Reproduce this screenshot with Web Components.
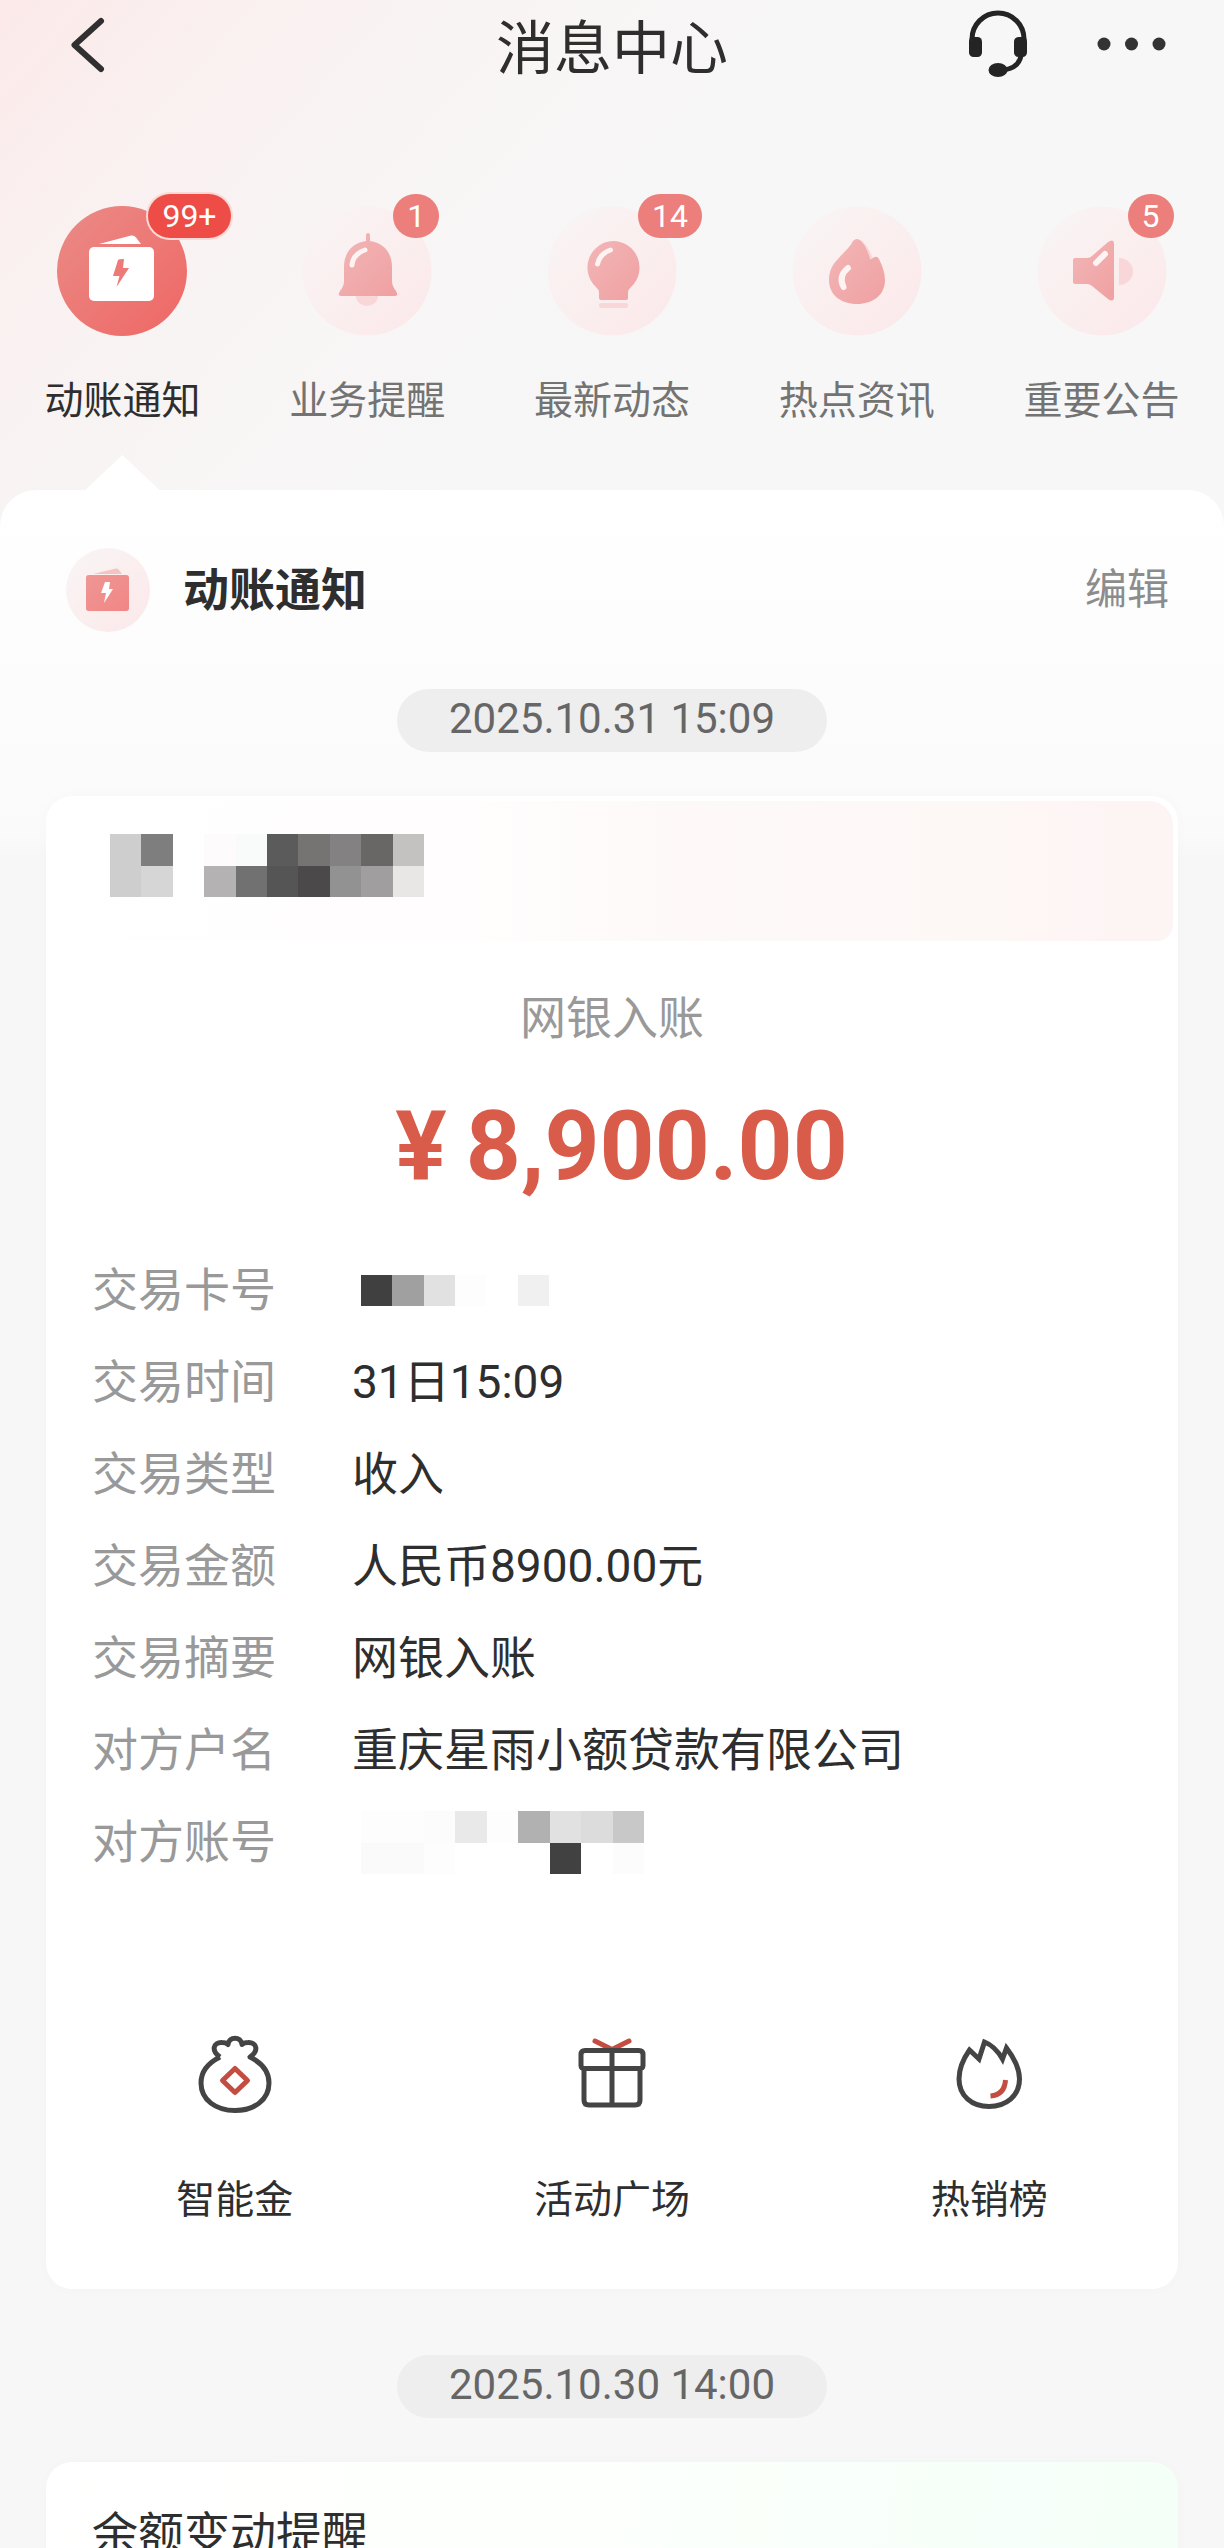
<!DOCTYPE html>
<html lang="zh-CN">
<head>
<meta charset="utf-8">
<meta name="viewport" content="width=device-width, initial-scale=1">
<title>消息中心</title>
<style>
  html, body { height: 100%; }
  body {
    margin: 0;
    background: #f7f7f7;
    color: #2e2e2e;
    font-family: Roboto, "Noto Sans CJK SC", sans-serif;
    font-size: 46px;
    --ink: #2e2e2e;
    --muted: #999;
    --accent: #d95c4a;
  }
</style>
</head>
<body>
<message-center>
  <nav-bar slot="bar">消息中心</nav-bar>
  <category-tabs slot="tabs">
    <category-tab icon="wallet" badge="99+" selected>动账通知</category-tab>
    <category-tab icon="bell" badge="1">业务提醒</category-tab>
    <category-tab icon="bulb" badge="14">最新动态</category-tab>
    <category-tab icon="flame">热点资讯</category-tab>
    <category-tab icon="horn" badge="5">重要公告</category-tab>
  </category-tabs>
  <message-panel heading="动账通知" action="编辑">
    <message-group time="2025.10.31 15:09">
      <transaction-card kind="网银入账" currency="¥" amount="8,900.00">
        <pixel-mosaic slot="source" label="来源" cols="10" rows="2"
          cells="cecece,7e7e7e,,fdfbfc,f9fafa,5b5b5b,757472,838182,686766,c3c2c0,cecece,d6d6d6,,b4b2b3,717171,555555,4b494a,929292,a09e9f,e8e7e6"></pixel-mosaic>
        <detail-row label="交易卡号"><pixel-mosaic label="卡号" cols="6" rows="1" inset cells="404040,a0a0a0,e1e1e1,fdfdfd,,f0f0f0"></pixel-mosaic></detail-row>
        <detail-row label="交易时间">31日15:09</detail-row>
        <detail-row label="交易类型">收入</detail-row>
        <detail-row label="交易金额">人民币8900.00元</detail-row>
        <detail-row label="交易摘要">网银入账</detail-row>
        <detail-row label="对方户名">重庆星雨小额贷款有限公司</detail-row>
        <detail-row label="对方账号"><pixel-mosaic label="账号" cols="9" rows="2" inset cells="fdfdfd,fdfdfd,fcfcfc,e9e9e9,fdfdfd,b1b1b1,e1e1e1,dcdcdc,c8c8c8,fafafa,fafafa,fdfdfd,,,,414141,,fcfcfc"></pixel-mosaic></detail-row>
        <quick-action slot="actions" icon="bag">智能金</quick-action>
        <quick-action slot="actions" icon="gift">活动广场</quick-action>
        <quick-action slot="actions" icon="fire">热销榜</quick-action>
      </transaction-card>
    </message-group>
    <message-group time="2025.10.30 14:00">
      <balance-card>余额变动提醒</balance-card>
    </message-group>
  </message-panel>
</message-center>

<script>
const define = (name, render) => customElements.define(name, class extends HTMLElement {
  connectedCallback() {
    if (this.shadowRoot) return;
    this.attachShadow({ mode: 'open' }).innerHTML = render(this);
  }
});

const RESET = `button{all:unset;box-sizing:border-box;cursor:pointer}button:focus-visible{outline:3px solid #d95c4a}svg{display:block}`;

/* Category icons share a 132-unit disc. */
const GRADS = `<defs>
  <linearGradient id="on" x1="0" y1="0" x2="1" y2="1"><stop offset="0" stop-color="#ea8b87"/><stop offset="1" stop-color="#ef6764"/></linearGradient>
  <linearGradient id="off" x1="0" y1="0" x2="1" y2="1"><stop offset="0" stop-color="#f9f5f5"/><stop offset="1" stop-color="#fce8e9"/></linearGradient>
  <linearGradient id="g" x1="0" y1="0" x2="1" y2="1"><stop offset="0" stop-color="#f2b6b7"/><stop offset="1" stop-color="#f0a0a1"/></linearGradient>
</defs>`;
const DISC = '<circle cx="66" cy="66" r="64.5" fill="url(#off)"/>';
const ICONS = {
  wallet: `<circle cx="66" cy="66" r="65" fill="url(#on)"/>
    <path d="M43 39 75 30.500Q78 30 80 32.500L85 39Z" fill="#fff"/>
    <rect x="33" y="42" width="65" height="54" rx="5" fill="#fff"/>
    <path d="M62 55Q63 54 68 54L67 63H73L60.500 82 63.500 71H57Z" fill="#ee7a77"/>`,
  bell: `${DISC}<path d="M55 91h22a11 10 0 0 1-22 0z" fill="#f9d6d7"/>
    <path d="M67 28q2 0 2 2v6c14 2 22 12 22 26v14q0 5 4 10 3 5-1 5H40q-4 0-1-5 4-5 4-10V62c0-14 8-24 22-26v-6q0-2 2-2z" fill="url(#g)"/>
    <path d="M51 60q1-11 13-15" fill="none" stroke="#fdf3f3" stroke-width="5" stroke-linecap="round"/>`,
  bulb: `${DISC}<path d="M67 36a26.500 26.500 0 0 1 18.500 45.500q-3.500 3-3.500 6V93q0 2-2 2H55q-2 0-2-2V87.500q0-3-3.500-6A26.500 26.500 0 0 1 67 36z" fill="url(#g)"/>
    <path d="M51.500 59q2-10 13-14" fill="none" stroke="#fdf3f3" stroke-width="5" stroke-linecap="round"/>
    <rect x="53" y="98" width="29" height="5" rx="2" fill="#f9d6d7"/>`,
  flame: `${DISC}<path d="M70 35q8 7 12 19l-6 6-10-16z" fill="#f9d6d7"/>
    <path d="M62 36q4-4 8 0 6 6 9 18 1 1 3-1 4-3 6 1 6 12 6 21c0 15-12 24-28 24S38 90 38 75c0-9 3-15 9-21 7-8 12-12 15-18z" fill="url(#g)"/>
    <path d="M57 63Q47 71 52.500 82" fill="none" stroke="#fdf3f3" stroke-width="6" stroke-linecap="round"/>`,
  horn: `${DISC}<path d="M83 53a14 13.500 0 0 1 0 27z" fill="#f9d6d7"/>
    <path d="M39 53h12q3 0 5-2l16-14q6-4 6 2v53q0 6-6 2L56 81q-2-2-5-2H39q-2 0-2-2V55q0-2 2-2z" fill="url(#g)"/>
    <path d="M60 58 69 49" stroke="#fdf3f3" stroke-width="6" stroke-linecap="round"/>`
};

define('message-center', () => `<style>
  :host{display:flex;flex-direction:column;height:100vh;overflow:hidden;
    background:linear-gradient(132deg,#fce9e9 0,#faf0f0 180px,#f8f5f5 440px,#f7f7f7 740px)}
  main{flex:1;min-height:0;display:flex;flex-direction:column}
</style><slot name="bar"></slot><slot name="tabs"></slot><main><slot></slot></main>`);

define('nav-bar', () => `<style>${RESET}
  :host{display:block}
  header{display:grid;grid-template-columns:1fr auto 1fr;align-items:center;height:88px;padding:0 58px}
  h1{margin:0;font:400 58px/84px "Noto Sans CJK SC",sans-serif}
  .end{display:flex;justify-content:flex-end;align-items:center;gap:68px}
</style><header>
  <button aria-label="返回"><svg width="60" height="66" viewBox="0 0 60 66"><path d="M43 10 16.500 34 43 58" fill="none" stroke="#303030" stroke-width="6" stroke-linecap="round" stroke-linejoin="round"/></svg></button>
  <h1><slot></slot></h1>
  <div class="end">
    <button aria-label="客服"><svg width="60" height="68" viewBox="0 0 60 68"><path d="M3 32V29a26 26 0 0 1 52 0v3M52 46q-3 13-19 14" fill="none" stroke="#242424" stroke-width="5"/><rect x="0" y="27" width="13" height="20" rx="4.500" fill="#242424"/><rect x="45" y="27" width="13" height="20" rx="4.500" fill="#242424"/><ellipse cx="29" cy="60" rx="9.500" ry="7" fill="#242424"/></svg></button>
    <button aria-label="更多"><svg width="69" height="14" viewBox="0 0 69 14"><g fill="#333"><circle cx="7" cy="7" r="6.500"/><circle cx="34.500" cy="7" r="6.500"/><circle cx="62" cy="7" r="6.500"/></g></svg></button>
  </div></header>`);

define('category-tabs', () => `<style>
  :host{display:block}
  nav{display:grid;grid-auto-flow:column;grid-auto-columns:1fr;padding-top:117px}
</style><nav role="tablist"><slot></slot></nav>`);

define('category-tab', el => {
  const on = el.hasAttribute('selected'), badge = el.getAttribute('badge');
  return `<style>${RESET}
  :host{display:block}
  button{display:flex;flex-direction:column;align-items:center;width:100%}
  .icon{position:relative}
  .badge{position:absolute;left:92px;top:-11px;box-sizing:border-box;min-width:44px;height:44px;padding:0 14px;border-radius:22px;
    background:${on ? '#ee4c46' : '#ec7e7b'};${on ? 'box-shadow:0 0 0 2px #fbd9d6;' : ''}color:#fff;font:400 32px/44px Roboto,sans-serif;text-align:center}
  .label{margin-top:36px;font-size:39px;line-height:56px;color:${on ? 'var(--ink)' : '#737373'};white-space:nowrap}
  .pointer{width:74px;height:35px;margin-top:26px;background:${on ? '#fff' : 'none'};clip-path:polygon(50% 0,100% 100%,0 100%)}
</style><button role="tab" aria-selected="${on}">
  <span class="icon"><svg width="132" height="132" viewBox="0 0 132 132">${GRADS}${ICONS[el.getAttribute('icon')]}</svg>${badge ? `<span class="badge">${badge}</span>` : ''}</span>
  <span class="label"><slot></slot></span><span class="pointer"></span></button>`;
});

define('message-panel', el => `<style>${RESET}
  :host{flex:1;min-height:0;display:flex;flex-direction:column;border-radius:36px 36px 0 0;
    background:linear-gradient(#fff 0,#fdfdfd 120px,#fafafa 345px,#f7f7f7 370px)}
  header{display:flex;align-items:center;gap:33px;padding:56px 55px 55px 66px}
  h2{flex:1;margin:0;font-size:46px;font-weight:700;line-height:88px}
  header button{font-size:42px;line-height:80px;color:#8c8c8c}
  .feed{flex:1;min-height:0;overflow:auto;scrollbar-width:none;display:flex;flex-direction:column;gap:66px}
</style><header>
  <svg width="84" height="88" viewBox="0 0 84 88" aria-hidden="true">${GRADS}
    <circle cx="42" cy="44" r="42" fill="url(#off)"/>
    <path d="M27 28 50 22.500Q52 22 53 24L56 28Z" fill="#f6c3c3"/>
    <rect x="20" y="29" width="43" height="36" rx="3" fill="#f2a09f"/><rect x="20" y="29" width="43" height="36" rx="3" fill="url(#on)" opacity=".45"/>
    <path d="M39 36h5l-1 7h4l-9 14 2-10h-5Z" fill="#fff"/></svg>
  <h2>${el.getAttribute('heading')}</h2><button>${el.getAttribute('action')}</button></header>
  <div class="feed"><slot></slot></div>`);

define('message-group', el => `<style>
  :host{display:flex;flex-direction:column;gap:44px;flex-shrink:0}
  time{align-self:center;box-sizing:border-box;height:63px;padding:0 52px;border-radius:32px;background:#eee;color:#666;font-size:42px;line-height:60px;white-space:nowrap}
</style><time>${el.getAttribute('time')}</time><slot></slot>`);

const CARD = `margin:0 46px;border-radius:26px;background:#fff;box-shadow:0 0 14px rgba(0,0,0,.02);overflow:hidden`;

define('transaction-card', el => `<style>
  :host{display:block;${CARD}}
  .source{height:140px;box-sizing:border-box;margin:5px 5px 0 0;padding:33px 64px;border-radius:0 24px 16px 0;
    background:linear-gradient(90deg,#fff 0,#fffdfd 38%,#fef9f9 55%,#fdf7f6 85%,#fdf4f4 100%)}
  .kind{margin:44px 0 0;text-align:center;line-height:66px;color:var(--muted)}
  .amount{margin:39px 0 0;text-align:center;font-size:96px;line-height:112px;font-weight:700;color:var(--accent)}
  .amount span{padding:0 19px}
  dl{margin:42px 46px 0}
  .actions{display:grid;grid-auto-flow:column;grid-auto-columns:1fr;padding:144px 0 61px}
</style>
  <div class="source"><slot name="source"></slot></div>
  <p class="kind">${el.getAttribute('kind')}</p>
  <p class="amount"><span>${el.getAttribute('currency')}</span>${el.getAttribute('amount')}</p>
  <dl><slot></slot></dl>
  <div class="actions"><slot name="actions"></slot></div>`);

define('detail-row', el => `<style>
  :host{display:grid;grid-template-columns:260px 1fr;align-items:center;height:92px;line-height:92px}
  dt{color:var(--muted)} dd{margin:0}
</style><dt>${el.getAttribute('label')}</dt><dd><slot></slot></dd>`);

define('quick-action', el => {
  const s = 'fill="none" stroke="#444" stroke-width="5" stroke-linejoin="round"';
  const r = 'fill="none" stroke="#c34d40" stroke-width="5"';
  const icon = {
    bag: `<path d="M27 25C18 19 20 10 29 10.500Q33 10.500 35 12.500C36 4 48 4 49 12.500Q51 10.500 55 10.500C64 10 66 19 57 25C69 31 76 40 76 51C76 68 61 78.500 42 78.500S8 68 8 51C8 40 15 31 27 25" ${s}/>
      <path d="M42 36.500 54.500 48.500 42 60.500 29.500 48.500Z" ${r} stroke-linejoin="round"/>`,
    gift: `<path d="M25 9 42 17.500 59 9" ${r} stroke-linecap="round"/>
      <path d="M15 18.500h54q4 0 4 4v11q0 3-4 3H15q-4 0-4-3v-11q0-4 4-4zM14 36.500V68q0 5 5 5h46q5 0 5-5V36.500M42 18v55" ${s}/>`,
    fire: `<path d="M22.500 18Q12 33 12 47C12 64 25 74.500 42 74.500S72.500 64 72.500 47Q72.500 33 59.500 16L55.500 27Q48 14 37.500 10L32 27Z" ${s} style="stroke-linejoin:miter"/>
      <path d="M58.500 48q-1 15-15 16" ${r}/>`
  }[el.getAttribute('icon')];
  return `<style>${RESET}
  :host{display:block}
  button{display:flex;flex-direction:column;align-items:center;gap:56px;width:100%;font-size:39px;line-height:56px}
</style><button><svg width="84" height="84" viewBox="0 0 84 84">${icon}</svg><span><slot></slot></span></button>`;
});

/* Redacted values: a row-major list of tile colours, blanks left clear. */
define('pixel-mosaic', el => {
  const cols = +el.getAttribute('cols'), rows = +el.getAttribute('rows');
  const cells = el.getAttribute('cells').split(',').map((c, i) => c ? `<rect x="${i % cols}" y="${Math.floor(i / cols)}" width="1" height="1" fill="#${c}"/>` : '').join('');
  const w = Math.round(cols * 31.4), h = Math.round(rows * 31.4);
  return `<style>:host{display:block}:host([inset]){padding-left:9px}svg{display:block}</style>
  <svg role="img" aria-label="${el.getAttribute('label')}" width="${w}" height="${h}" viewBox="0 0 ${cols} ${rows}" preserveAspectRatio="none" shape-rendering="crispEdges">${cells}</svg>`;
});

define('balance-card', () => `<style>
  :host{display:block;${CARD};border-radius:26px 26px 0 0;background:linear-gradient(100deg,#fff 0,#fdfffc 45%,#f4fff8 100%)}
  h3{margin:0;padding:42px 46px 0;font-size:46px;font-weight:400;line-height:60px}
</style><h3><slot></slot></h3>`);
</script>
</body>
</html>
